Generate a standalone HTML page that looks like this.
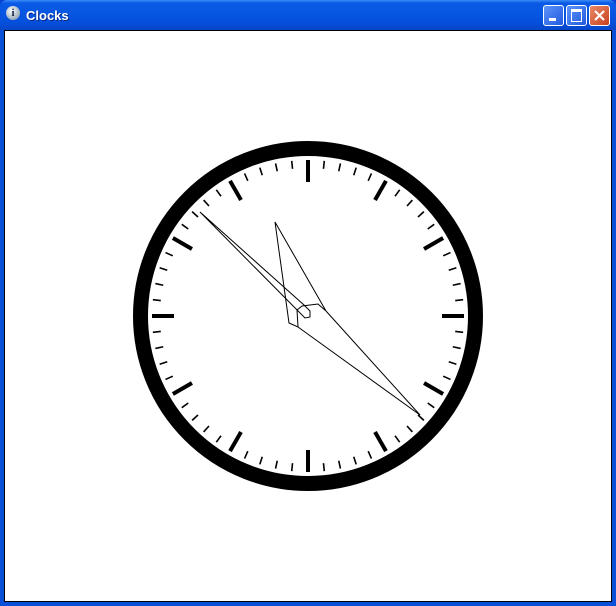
<!DOCTYPE html>
<html><head><style>
html,body{margin:0;padding:0;width:616px;height:606px;overflow:hidden;background:#0842d0}
.win{position:absolute;left:0;top:0;width:616px;height:606px;background:#0a4fd8;border-radius:7px 7px 0 0}
.tb{position:absolute;left:0;top:0;width:616px;height:30px;border-radius:7px 7px 0 0;background:linear-gradient(#3d8bf7 0,#0a5ae6 3px,#0757e3 12px,#0550dc 22px,#0645c8 30px)}
.title{position:absolute;left:26px;top:8px;color:#fff;font:bold 13px "Liberation Sans",sans-serif;text-shadow:1px 1px #0a2a80}
.ico{position:absolute;left:6px;top:6px;width:14px;height:14px;border-radius:50%;background:radial-gradient(circle at 40% 35%,#fff,#9ab 70%);color:#124;font:bold 11px "Liberation Serif";text-align:center;line-height:14px}
.btn{position:absolute;top:5px;width:19px;height:19px;border:1px solid #fff;border-radius:3px;background:linear-gradient(135deg,#5d94f8,#2259e0)}
.client{position:absolute;left:4px;top:30px;width:606px;height:570px;background:#fff;border:1px solid #000}
</style></head><body>
<div class="win">
<div class="tb"></div>
<div class="ico">i</div>
<div class="title">Clocks</div>
<div class="btn" style="left:543px"><div style="position:absolute;left:5px;top:12px;width:7px;height:3px;background:#fff"></div></div>
<div class="btn" style="left:566px"><div style="position:absolute;left:4px;top:3px;width:9px;height:9px;border:1px solid #fff;border-top-width:3px"></div></div>
<div class="btn" style="left:589px;background:linear-gradient(135deg,#e88a6a,#c8401e)"><svg width="19" height="19" style="position:absolute;left:0;top:0"><path d="M5 5L14 14M14 5L5 14" stroke="#fff" stroke-width="2"/></svg></div>
<div class="client"></div>
<svg width="616" height="606" style="position:absolute;left:0;top:0">
<circle cx="308" cy="316" r="167.5" fill="none" stroke="#000" stroke-width="15"/>
<g id="t" stroke="#000"></g>
<g fill="none" stroke="#000" stroke-width="1">
<polygon points="275,222 289,323 298,327 297,310 302,306 318,304 326,311"/>
<polygon points="200,212 304,305 310,311 310,317 305,318 200,212"/>
<line x1="298" y1="327" x2="420" y2="415"/>
<line x1="326" y1="311" x2="420" y2="415"/>
</g>
</svg>
<script>
var g=document.getElementById('t'),s='';
for(var i=0;i<60;i++){var a=i*Math.PI/30,c=Math.cos(a),n=Math.sin(a);
var r1,r2,w;if(i%5==0){r1=134;r2=156;w=4;}else{r1=148;r2=156;w=1.6;}
s+='<line x1="'+(308+n*r1)+'" y1="'+(316-c*r1)+'" x2="'+(308+n*r2)+'" y2="'+(316-c*r2)+'" stroke-width="'+w+'"/>';}
g.innerHTML=s;
</script>
</div>
</body></html>
